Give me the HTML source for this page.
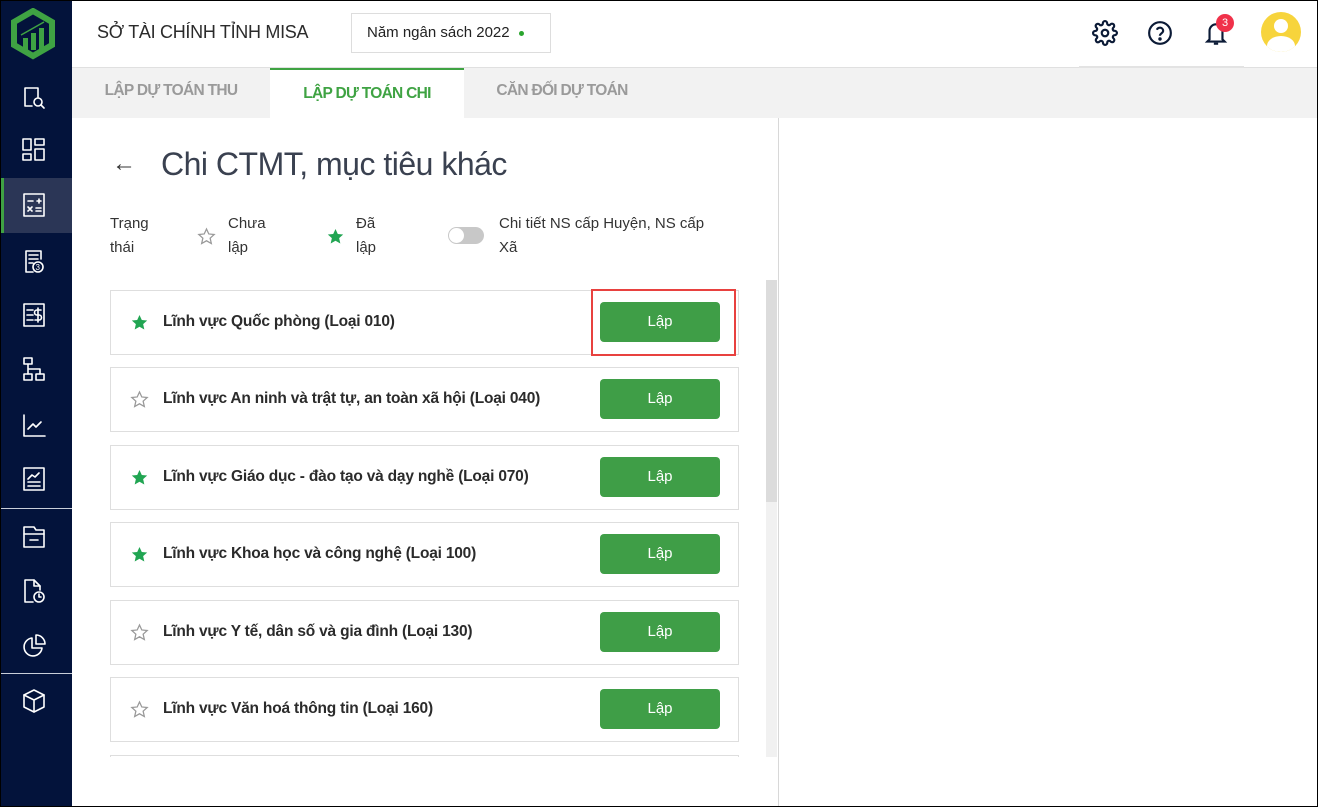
<!DOCTYPE html>
<html><head><meta charset="utf-8"><style>
*{box-sizing:border-box;margin:0;padding:0}
body{width:1318px;height:807px;overflow:hidden;background:#fff;font-family:"Liberation Sans",Arial,sans-serif;position:relative;color:#1f2937}
.sb{position:absolute;left:0;top:0;width:72px;height:807px;background:#03133b}
.ic{position:absolute;left:20px;width:28px;height:28px}
.ic svg{width:28px;height:28px;fill:none;stroke:#fff;stroke-width:1.6;stroke-linejoin:round;stroke-linecap:round}
.sep{position:absolute;left:0;width:72px;height:1px;background:#c9ced9}
.hdr{position:absolute;left:72px;top:0;right:0;height:68px;background:#fff;border-bottom:1px solid #e0e0e0}
.tabs{position:absolute;left:72px;top:68px;right:0;height:50px;background:#f2f2f2}
.tab{position:absolute;top:0;height:50px;line-height:46px;font-size:15.5px;font-weight:bold;color:#9a9a9a;text-align:center;white-space:nowrap;letter-spacing:-0.7px}
.card{position:absolute;left:110px;width:629px;height:65px;border:1px solid #dedede;background:#fff}
.card .t{position:absolute;left:52px;top:22px;font-size:15.5px;font-weight:bold;color:#2b2b2b;letter-spacing:-0.2px}
.card .s{position:absolute;left:19px;top:22px;width:19px;height:19px}
.btn{position:absolute;left:489px;top:11px;width:120px;height:40px;background:#3f9e47;border-radius:4px;color:#fff;font-size:15px;text-align:center;line-height:40px}
</style></head><body>
<div class="sb">
<svg style="position:absolute;left:10px;top:8px" width="46" height="52" viewBox="0 0 46 52"><path d="M23 3 L42 14 L42 37 L23 48 L4 37 L4 14 Z" fill="none" stroke="#3fa343" stroke-width="6"/><rect x="13" y="30" width="5" height="12" fill="#3fa343"/><rect x="21" y="25" width="5" height="17" fill="#3fa343"/><rect x="29" y="20" width="5" height="22" fill="#3fa343"/><path d="M11 27 Q20 22 34 14" stroke="#3fa343" stroke-width="1.5" fill="none"/></svg>
<div class="ic" style="top:84px"><svg viewBox="0 0 28 28"><path d="M12 22H5V4h13v9"/><circle cx="18" cy="18" r="4"/><path d="M21 21l3 3"/></svg></div>
<div class="ic" style="top:136px"><svg viewBox="0 0 28 28"><rect x="3" y="3" width="8" height="11"/><rect x="3" y="18" width="8" height="6"/><rect x="15" y="3" width="9" height="6"/><rect x="15" y="13" width="9" height="11"/></svg></div>
<div style="position:absolute;left:0;top:178px;width:72px;height:55px;background:#2b3656"></div>
<div style="position:absolute;left:1px;top:178px;width:3px;height:55px;background:#3fa343"></div>
<div class="ic" style="top:191px"><svg viewBox="0 0 28 28"><rect x="4" y="3" width="20" height="22"/><path d="M8 10h5M17 10h4M19 8v4M8 16l4 4M12 16l-4 4M16 17h5M16 20h5"/></svg></div>
<div class="ic" style="top:248px"><svg viewBox="0 0 28 28"><path d="M13 24H6V3h15v8"/><path d="M9 7h9M9 11h9M9 15h4"/><circle cx="18" cy="19" r="5"/><text x="15.5" y="22" font-size="8" fill="#fff" stroke="none">3</text></svg></div>
<div class="ic" style="top:301px"><svg viewBox="0 0 28 28"><rect x="4" y="3" width="20" height="22"/><path d="M7 9h6M7 14h6M7 19h6M21 9h-4a2 2 0 0 0 0 5h2a2 2 0 0 1 0 5h-4M18 7v14"/></svg></div>
<div class="ic" style="top:355px"><svg viewBox="0 0 28 28"><rect x="4" y="3" width="8" height="6"/><rect x="4" y="19" width="8" height="6"/><rect x="16" y="19" width="8" height="6"/><path d="M8 9v10M8 14h12v5"/></svg></div>
<div class="ic" style="top:412px"><svg viewBox="0 0 28 28"><path d="M4 3v21h21"/><path d="M8 17l5-5 3 3 5-5"/></svg></div>
<div class="ic" style="top:465px"><svg viewBox="0 0 28 28"><rect x="4" y="3" width="20" height="22"/><path d="M8 14l4-4 3 2 4-4M8 17h12M8 21h12"/></svg></div>
<div class="sep" style="top:508px"></div>
<div class="ic" style="top:522px"><svg viewBox="0 0 28 28"><path d="M4 25V5h10l2 3h8v17z"/><path d="M4 12h20M10 18h8"/></svg></div>
<div class="ic" style="top:577px"><svg viewBox="0 0 28 28"><path d="M13 25H5V3h9l6 6v4"/><path d="M14 3v6h6"/><circle cx="19" cy="20" r="5"/><path d="M19 17v3h2"/></svg></div>
<div class="ic" style="top:632px"><svg viewBox="0 0 28 28"><path d="M12 6a9 9 0 1 0 10 10H12z"/><path d="M16 3v9h9a9 9 0 0 0-9-9z"/></svg></div>
<div class="sep" style="top:673px"></div>
<div class="ic" style="top:687px"><svg viewBox="0 0 28 28"><path d="M14 3l10 5v12l-10 5-10-5V8z"/><path d="M4 8l10 5 10-5M14 13v12"/></svg></div>
</div>
<div class="hdr">
<div style="position:absolute;left:25px;top:22px;font-size:18px;color:#2b2b2b;letter-spacing:-0.3px">SỞ TÀI CHÍNH TỈNH MISA</div>
<div style="position:absolute;left:279px;top:13px;width:200px;height:40px;border:1px solid #ddd;font-size:15px;line-height:38px;padding-left:15px;color:#222">Năm ngân sách 2022 <span style="display:inline-block;width:5px;height:5px;border-radius:50%;background:#2aa52e;vertical-align:middle;margin-left:5px"></span></div>
<svg style="position:absolute;left:1020px;top:20px" width="26" height="26" viewBox="0 0 24 24" fill="none" stroke="#0b1a36" stroke-width="2"><circle cx="12" cy="12" r="3"/><path d="M19.4 15a1.7 1.7 0 0 0 .3 1.8l.1.1a2 2 0 1 1-2.8 2.8l-.1-.1a1.7 1.7 0 0 0-1.8-.3 1.7 1.7 0 0 0-1 1.5V21a2 2 0 1 1-4 0v-.1a1.7 1.7 0 0 0-1.1-1.5 1.7 1.7 0 0 0-1.8.3l-.1.1a2 2 0 1 1-2.8-2.8l.1-.1a1.7 1.7 0 0 0 .3-1.800 1.7 1.7 0 0 0-1.5-1H3a2 2 0 1 1 0-4h.1a1.7 1.7 0 0 0 1.5-1.1 1.7 1.7 0 0 0-.3-1.8l-.1-.1a2 2 0 1 1 2.8-2.8l.1.1a1.7 1.7 0 0 0 1.8.3H9a1.7 1.7 0 0 0 1-1.5V3a2 2 0 1 1 4 0v.1a1.7 1.7 0 0 0 1 1.5 1.7 1.7 0 0 0 1.8-.3l.1-.1a2 2 0 1 1 2.8 2.8l-.1.1a1.7 1.7 0 0 0-.3 1.8V9a1.7 1.7 0 0 0 1.5 1H21a2 2 0 1 1 0 4h-.1a1.7 1.7 0 0 0-1.5 1z"/></svg>
<svg style="position:absolute;left:1075px;top:20px" width="26" height="26" viewBox="0 0 24 24" fill="none" stroke="#0b1a36" stroke-width="2"><circle cx="12" cy="12" r="10"/><path d="M9.1 9a3 3 0 0 1 5.8 1c0 2-3 2.5-3 4.5"/><circle cx="12" cy="17.5" r=".6" fill="#0b1a36"/></svg>
<svg style="position:absolute;left:1131px;top:20px" width="26" height="28" viewBox="0 0 24 26" fill="none" stroke="#0b1a36" stroke-width="2"><path d="M6 18V10a6 6 0 0 1 12 0v8l2 2H4z"/><path d="M10 22h4"/></svg>
<div style="position:absolute;left:1144px;top:14px;width:18px;height:18px;border-radius:50%;background:#f0314a;color:#fff;font-size:11px;text-align:center;line-height:18px">3</div>
<div style="position:absolute;left:1189px;top:12px;width:40px;height:40px;border-radius:50%;background:#f7d43c;overflow:hidden"><div style="position:absolute;left:13px;top:7px;width:14px;height:14px;border-radius:50%;background:#fff"></div><div style="position:absolute;left:6px;top:24px;width:28px;height:20px;border-radius:50%;background:#fff"></div></div>
<div style="position:absolute;left:1007px;top:66px;width:165px;height:2px;background:#e3e3e3"></div>
</div>
<div class="tabs">
<div class="tab" style="left:0;width:198px">LẬP DỰ TOÁN THU</div>
<div class="tab" style="left:198px;width:194px;background:#fff;border-top:2px solid #3fa343;color:#3fa343;line-height:48px">LẬP DỰ TOÁN CHI</div>
<div class="tab" style="left:392px;width:196px">CĂN ĐỐI DỰ TOÁN</div>
</div>
<div style="position:absolute;left:778px;top:118px;width:1px;height:689px;background:#d8d8d8"></div>
<div style="position:absolute;left:766px;top:280px;width:11px;height:477px;background:#f1f1f1"></div>
<div style="position:absolute;left:766px;top:280px;width:11px;height:222px;background:#dcdcdc"></div>
<div style="position:absolute;left:112px;top:150px;font-size:24px;color:#333">←</div>
<div style="position:absolute;left:161px;top:146px;font-size:32px;color:#3a4150;letter-spacing:-0.5px">Chi CTMT, mục tiêu khác</div>
<div style="position:absolute;left:110px;top:212px;font-size:15px;line-height:24px;color:#333">Trạng<br>thái</div>
<svg style="position:absolute;left:197px;top:227px" width="19" height="19" viewBox="0 0 24 24"><path d="M12 2.5l2.9 6.3 6.8.7-5.1 4.6 1.5 6.8L12 17.4l-6.1 3.5 1.5-6.8-5.1-4.6 6.8-.7z" fill="none" stroke="#999" stroke-width="1.6"/></svg>
<div style="position:absolute;left:228px;top:212px;font-size:15px;line-height:24px;color:#333">Chưa<br>lập</div>
<svg style="position:absolute;left:326px;top:227px" width="19" height="19" viewBox="0 0 24 24"><path d="M12 2.5l2.9 6.3 6.8.7-5.1 4.6 1.5 6.8L12 17.4l-6.1 3.5 1.5-6.8-5.1-4.6 6.8-.7z" fill="#21a552"/></svg>
<div style="position:absolute;left:356px;top:212px;font-size:15px;line-height:24px;color:#333">Đã<br>lập</div>
<div style="position:absolute;left:448px;top:227px;width:36px;height:17px;border-radius:9px;background:#c8c8c8"><div style="position:absolute;left:1px;top:1px;width:15px;height:15px;border-radius:50%;background:#fff"></div></div>
<div style="position:absolute;left:499px;top:212px;font-size:15px;line-height:24px;color:#333">Chi tiết NS cấp Huyện, NS cấp<br>Xã</div>

<div class="card" style="top:290px"><svg class="s" viewBox="0 0 24 24"><path d="M12 2.5l2.9 6.3 6.8.7-5.1 4.6 1.5 6.8L12 17.4l-6.1 3.5 1.5-6.8-5.1-4.6 6.8-.7z" fill="#21a552"/></svg><div class="t">Lĩnh vực Quốc phòng (Loại 010)</div><div class="btn">Lập</div></div>
<div class="card" style="top:367px"><svg class="s" viewBox="0 0 24 24"><path d="M12 2.5l2.9 6.3 6.8.7-5.1 4.6 1.5 6.8L12 17.4l-6.1 3.5 1.5-6.8-5.1-4.6 6.8-.7z" fill="none" stroke="#999" stroke-width="1.6"/></svg><div class="t">Lĩnh vực An ninh và trật tự, an toàn xã hội (Loại 040)</div><div class="btn">Lập</div></div>
<div class="card" style="top:445px"><svg class="s" viewBox="0 0 24 24"><path d="M12 2.5l2.9 6.3 6.8.7-5.1 4.6 1.5 6.8L12 17.4l-6.1 3.5 1.5-6.8-5.1-4.6 6.8-.7z" fill="#21a552"/></svg><div class="t">Lĩnh vực Giáo dục - đào tạo và dạy nghề (Loại 070)</div><div class="btn">Lập</div></div>
<div class="card" style="top:522px"><svg class="s" viewBox="0 0 24 24"><path d="M12 2.5l2.9 6.3 6.8.7-5.1 4.6 1.5 6.8L12 17.4l-6.1 3.5 1.5-6.8-5.1-4.6 6.8-.7z" fill="#21a552"/></svg><div class="t">Lĩnh vực Khoa học và công nghệ (Loại 100)</div><div class="btn">Lập</div></div>
<div class="card" style="top:600px"><svg class="s" viewBox="0 0 24 24"><path d="M12 2.5l2.9 6.3 6.8.7-5.1 4.6 1.5 6.8L12 17.4l-6.1 3.5 1.5-6.8-5.1-4.6 6.8-.7z" fill="none" stroke="#999" stroke-width="1.6"/></svg><div class="t">Lĩnh vực Y tế, dân số và gia đình (Loại 130)</div><div class="btn">Lập</div></div>
<div class="card" style="top:677px"><svg class="s" viewBox="0 0 24 24"><path d="M12 2.5l2.9 6.3 6.8.7-5.1 4.6 1.5 6.8L12 17.4l-6.1 3.5 1.5-6.8-5.1-4.6 6.8-.7z" fill="none" stroke="#999" stroke-width="1.6"/></svg><div class="t">Lĩnh vực Văn hoá thông tin (Loại 160)</div><div class="btn">Lập</div></div>
<div class="card" style="top:755px;height:2px;border-bottom:none"></div>
<div style="position:absolute;left:591px;top:289px;width:145px;height:67px;border:2px solid #e8413f"></div>
<div style="position:absolute;left:0;top:0;width:1318px;height:807px;border:1px solid #000;pointer-events:none"></div>
</body></html>
